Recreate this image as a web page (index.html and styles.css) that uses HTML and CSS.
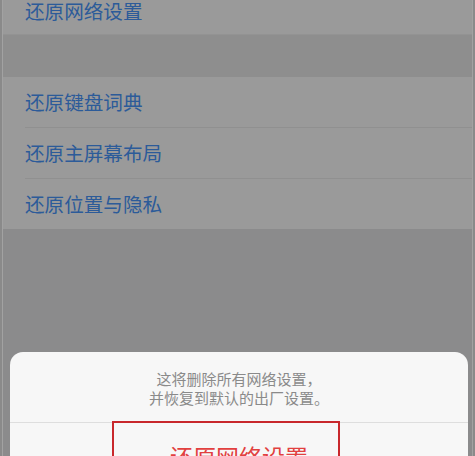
FILE: index.html
```html
<!DOCTYPE html>
<html lang="zh-CN">
<head>
<meta charset="utf-8">
<link rel="stylesheet" href="styles.css">
</head>
<body>
<div class="frame">
  <div class="screen">
    <div class="group">
      <div class="row row-first"><span class="label">还原网络设置</span></div>
    </div>
    <div class="band"></div>
    <div class="group">
      <div class="row"><span class="label">还原键盘词典</span></div>
      <div class="row"><span class="label">还原主屏幕布局</span></div>
      <div class="row row-last"><span class="label">还原位置与隐私</span></div>
    </div>
    <div class="sheet">
      <div class="message">这将删除所有网络设置，<br>并恢复到默认的出厂设置。</div>
      <div class="action">还原网络设置</div>
      <div class="highlight"></div>
    </div>
  </div>
</div>
</body>
</html>
```

FILE: styles.css
```css
html, body {
  margin: 0;
  padding: 0;
}
body {
  width: 475px;
  height: 456px;
  overflow: hidden;
  background: #8a8a8a;
  font-family: "Noto Sans CJK SC", "Noto Sans", sans-serif;
}
.frame {
  height: 456px;
  padding: 0 2px;
  box-sizing: border-box;
}
.screen {
  position: relative;
  height: 456px;
  overflow: hidden;
  border-left: 1px solid #a2a2a2;
  border-right: 1px solid #a2a2a2;
  background: #8b8b8c;
}
.group {
  background: #9a9a9a;
}
.row {
  height: 50px;
  display: flex;
  align-items: center;
  padding-left: 22px;
  position: relative;
}
.row::after {
  content: "";
  position: absolute;
  left: 22px;
  right: 0;
  bottom: -1px;
  height: 1px;
  background: #909090;
}
.row + .row {
  margin-top: 1px;
}
.row-first {
  height: 35px;
  align-items: flex-start;
}
.row-first::after {
  left: 0;
  bottom: 0;
  background: #939393;
}
.row-last::after {
  display: none;
}
.label {
  font-size: 19.6px;
  line-height: 22px;
  color: #2c5b99;
}
.band {
  height: 42px;
  background: #8e8e8e;
}
.sheet {
  position: absolute;
  left: 7px;
  right: 4px;
  top: 352px;
  height: 104px;
  overflow: hidden;
  background: #f7f7f7;
  border-radius: 13px 13px 0 0;
}
.message {
  padding: 17px 0 15px;
  text-align: center;
  font-size: 15px;
  line-height: 19px;
  color: #8a8a8a;
  border-bottom: 1px solid #dedede;
}
.action {
  padding-top: 19px;
  text-align: center;
  font-size: 23px;
  line-height: 28px;
  color: #e2403f;
}
.highlight {
  position: absolute;
  left: 102px;
  top: 69px;
  width: 224px;
  height: 60px;
  border: 2px solid #c8282c;
}
```
